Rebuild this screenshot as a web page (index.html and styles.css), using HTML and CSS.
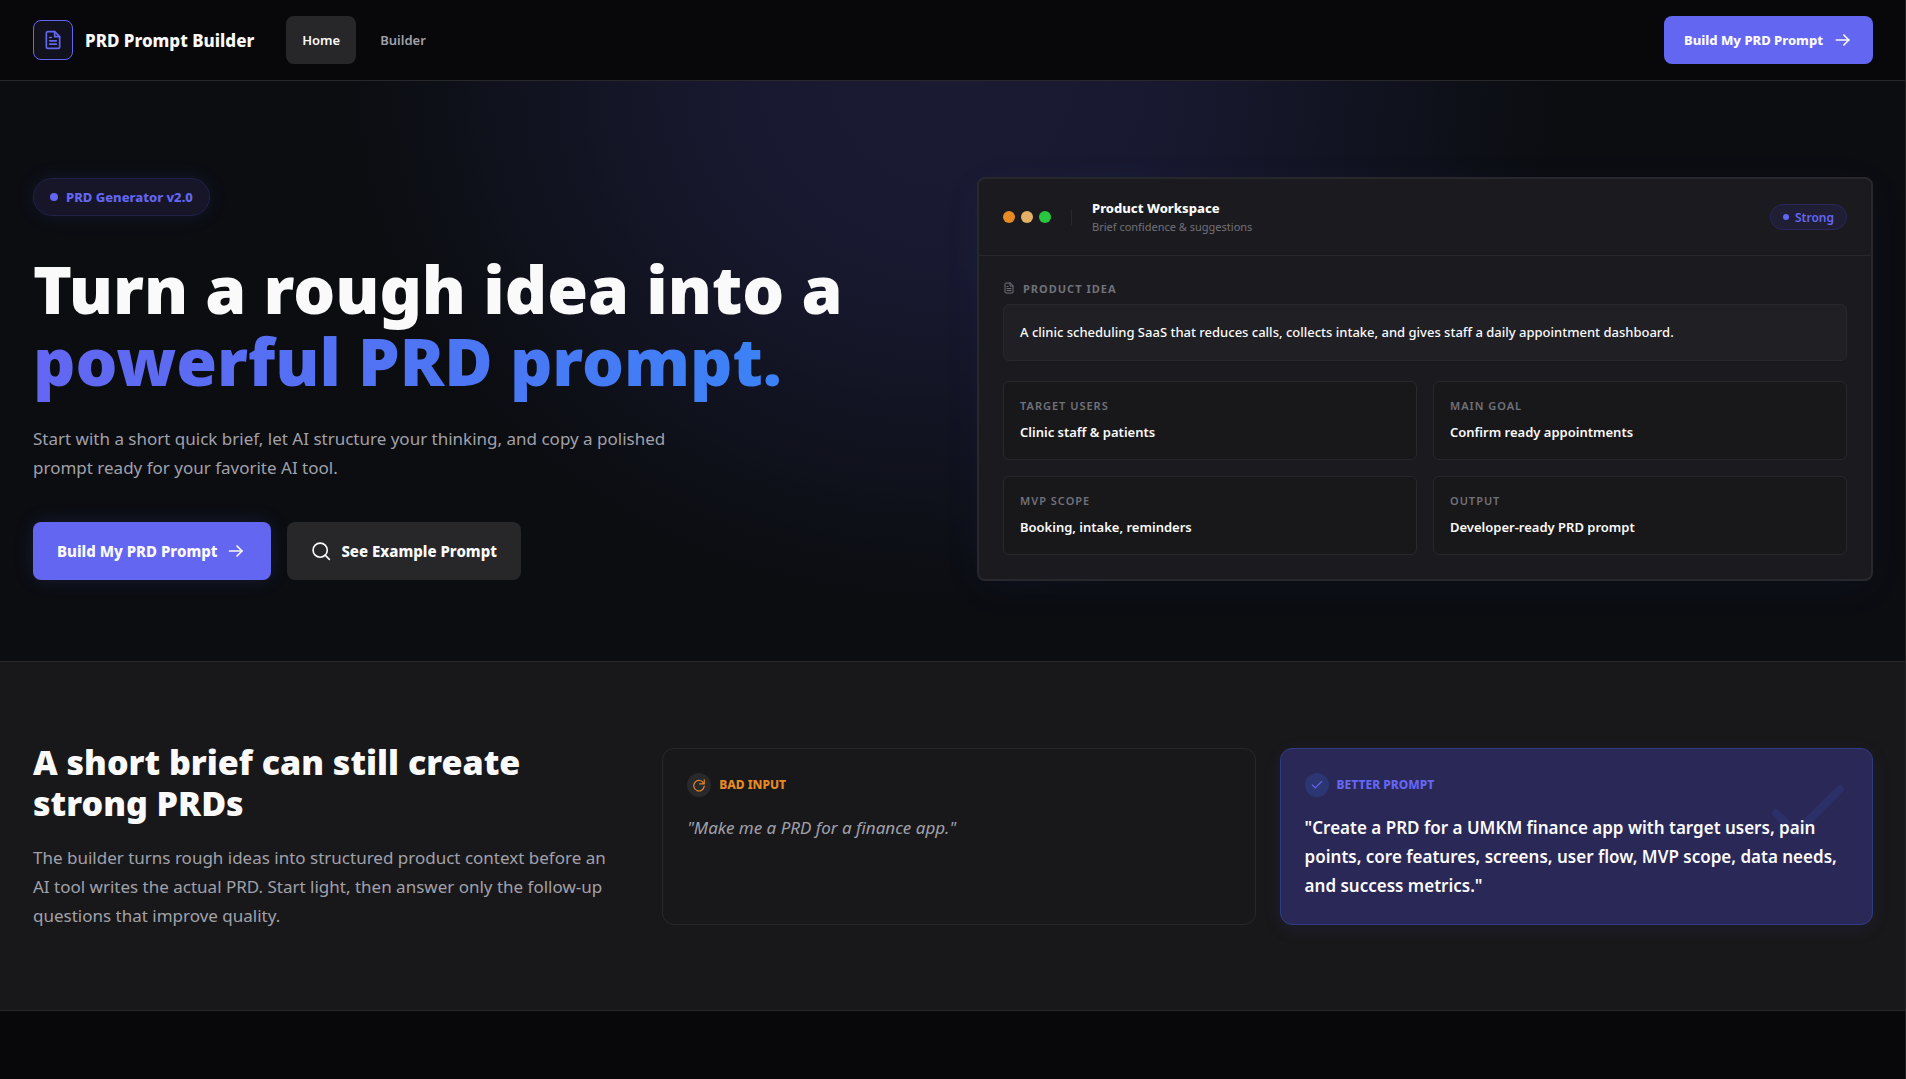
FILE: index.html
```
<!DOCTYPE html>
<html lang="en">
<head>
<meta charset="UTF-8">
<meta name="viewport" content="width=device-width, initial-scale=1.0">
<title>PRD Prompt Builder</title>
<link rel="stylesheet" href="styles.css">
</head>
<body>
    <header class="topbar">
        <div class="container topbar-inner">
            <a class="brand" href="#">
                <span class="brand-icon">
                    <svg class="icon" width="20" height="20" viewBox="0 0 24 24"><path d="M14 2H6a2 2 0 0 0-2 2v16a2 2 0 0 0 2 2h12a2 2 0 0 0 2-2V8z"/><path d="M14 2v6h6"/><path d="M16 13H8"/><path d="M16 17H8"/><path d="M10 9H8"/></svg>
                </span>
                <span class="brand-name">PRD Prompt Builder</span>
            </a>
            <nav class="nav">
                <a class="nav-link active" href="#">Home</a>
                <a class="nav-link" href="#builder">Builder</a>
            </nav>
            <button class="btn btn-primary btn-small" type="button">
                Build My PRD Prompt
                <svg class="icon" width="20" height="20" viewBox="0 0 24 24"><path d="M4 12h15"/><path d="M13 6l6 6-6 6"/></svg>
            </button>
        </div>
    </header>

    <main>
        <section class="hero">
            <div class="container hero-grid">
                <div class="hero-copy">
                    <span class="version"><span class="version-dot"></span>PRD Generator v2.0</span>
                    <h1>Turn a rough idea into a<br><span class="gradient-text">powerful PRD prompt.</span></h1>
                    <p class="lead hero-lead">Start with a short quick brief, let AI structure your thinking, and copy a polished prompt ready for your favorite AI tool.</p>
                    <div class="actions">
                        <button class="btn btn-primary btn-glow" type="button">
                            Build My PRD Prompt
                            <svg class="icon" width="20" height="20" viewBox="0 0 24 24"><path d="M3 12h15"/><path d="M12 6l6 6-6 6"/></svg>
                        </button>
                        <button class="btn btn-dark" type="button">
                            <svg class="icon" width="20" height="20" viewBox="0 0 24 24"><circle cx="11" cy="11" r="8.500"/><path d="M22 22l-5-5"/></svg>
                            See Example Prompt
                        </button>
                    </div>
                </div>

                <div class="workspace">
                    <div class="workspace-head">
                        <div class="lights">
                            <span class="light orange"></span>
                            <span class="light yellow"></span>
                            <span class="light green"></span>
                        </div>
                        <span class="divider"></span>
                        <div class="workspace-title">
                            <strong>Product Workspace</strong>
                            <span>Brief confidence &amp; suggestions</span>
                        </div>
                        <span class="status"><span class="status-dot"></span>Strong</span>
                    </div>
                    <div class="workspace-body">
                        <div class="idea-label">
                            <svg class="icon" width="12" height="12" viewBox="0 0 24 24"><path d="M14 2H6a2 2 0 0 0-2 2v16a2 2 0 0 0 2 2h12a2 2 0 0 0 2-2V8z"/><path d="M14 2v6h6"/><path d="M16 13H8"/><path d="M16 17H8"/><path d="M10 9H8"/></svg>
                            Product idea
                        </div>
                        <p class="idea">A clinic scheduling SaaS that reduces calls, collects intake, and gives staff a daily appointment dashboard.</p>
                        <dl class="facts">
                            <div class="fact"><dt>Target users</dt><dd>Clinic staff &amp; patients</dd></div>
                            <div class="fact"><dt>Main goal</dt><dd>Confirm ready appointments</dd></div>
                            <div class="fact"><dt>MVP scope</dt><dd>Booking, intake, reminders</dd></div>
                            <div class="fact"><dt>Output</dt><dd>Developer-ready PRD prompt</dd></div>
                        </dl>
                    </div>
                </div>
            </div>
        </section>

        <section class="compare">
            <div class="container compare-grid">
                <div class="compare-copy">
                    <h2>A short brief can still create strong PRDs</h2>
                    <p class="lead">The builder turns rough ideas into structured product context before an AI tool writes the actual PRD. Start light, then answer only the follow-up questions that improve quality.</p>
                </div>
                <div class="examples">
                    <article class="example">
                        <h3 class="example-title bad">
                            <span class="example-icon"><svg class="icon" width="14" height="14" viewBox="0 0 24 24"><path d="M20 9a9 9 0 1 0 1 5"/><path d="M21 3v7h-8"/></svg></span>
                            Bad input
                        </h3>
                        <p class="quote muted">"Make me a PRD for a finance app."</p>
                    </article>
                    <article class="example better">
                        <svg class="watermark" width="96" height="96" viewBox="0 0 24 24"><path d="M20 6L9 17l-5-5"/></svg>
                        <h3 class="example-title good">
                            <span class="example-icon"><svg class="icon" width="14" height="14" viewBox="0 0 24 24"><path d="M20 6L9 17l-5-5"/></svg></span>
                            Better prompt
                        </h3>
                        <p class="quote">"Create a PRD for a UMKM finance app with target users, pain points, core features, screens, user flow, MVP scope, data needs, and success metrics."</p>
                    </article>
                </div>
            </div>
        </section>
    </main>
</body>
</html>
```
FILE: styles.css
```
:root {
    --bg: #08080a;
    --panel: #18181a;
    --card: #1b1b1f;
    --line: #28282c;
    --accent: #6366f1;
    --text: #fafafa;
    --muted: #a1a1aa;
    --dim: #71717a;
}
* {
    box-sizing: border-box;
}
body {
    margin: 0;
    min-height: 100vh;
    border-right: 1px solid #232326;
    background: var(--bg);
    color: var(--text);
    font-family: "Noto Sans", "Open Sans", sans-serif;
    font-size: 14px;
}
h1, h2, h3, p, dl, dd {
    margin: 0;
}
a {
    color: inherit;
    text-decoration: none;
}
.container {
    padding: 0 32px 0 33px;
}
.icon {
    flex: none;
    fill: none;
    stroke: currentColor;
    stroke-width: 2;
    stroke-linecap: round;
    stroke-linejoin: round;
}

/* top bar */
.topbar {
    border-bottom: 1px solid var(--line);
}
.topbar-inner {
    display: flex;
    align-items: center;
    height: 80px;
}
.brand {
    display: flex;
    align-items: center;
    gap: 12px;
}
.brand-icon {
    display: flex;
    align-items: center;
    justify-content: center;
    width: 40px;
    height: 40px;
    border: 1px solid var(--accent);
    border-radius: 8px;
    background: #12121f;
    color: var(--accent);
}
.brand-name {
    font-size: 17px;
    font-weight: 800;
}
.nav {
    display: flex;
    gap: 8px;
    margin-left: 32px;
    margin-right: auto;
}
.nav-link {
    padding: 0 16px;
    border-radius: 8px;
    color: var(--muted);
    font-size: 13px;
    font-weight: 600;
    line-height: 48px;
}
.nav-link.active {
    background: #27272a;
    color: var(--text);
}

.btn {
    display: flex;
    align-items: center;
    justify-content: center;
    gap: 10px;
    height: 58px;
    padding: 0 24px;
    border: none;
    border-radius: 8px;
    color: var(--text);
    font-family: inherit;
    font-size: 15px;
    font-weight: 800;
    cursor: pointer;
}
.btn-small {
    height: 48px;
    padding: 0 20px;
    font-size: 13px;
}
.btn-primary {
    background: var(--accent);
}
.btn-glow {
    box-shadow: 0 0 20px rgba(99, 102, 241, 0.15);
}
.btn-dark {
    background: #27272a;
}

/* hero */
.hero {
    padding: 96px 0 80px;
    border-bottom: 1px solid var(--line);
    background: radial-gradient(ellipse 600px 520px at 50% 0, #1b1a33, #181930 35%, transparent), #0b0d11;
}
.hero-grid {
    display: grid;
    grid-template-columns: 1fr 1fr;
    gap: 48px;
    align-items: center;
}
.hero-copy {
    display: flex;
    flex-direction: column;
    align-items: flex-start;
}
.version {
    display: flex;
    align-items: center;
    gap: 8px;
    height: 38px;
    padding: 0 16px;
    border: 1px solid #20214a;
    border-radius: 19px;
    background: #161628;
    box-shadow: 0 0 20px rgba(99, 102, 241, 0.12);
    color: var(--accent);
    font-size: 13px;
    font-weight: 800;
}
.version-dot {
    width: 8px;
    height: 8px;
    border-radius: 50%;
    background: var(--accent);
}
h1 {
    margin-top: 36px;
    font-size: 66px;
    font-weight: 900;
    line-height: 72px;
}
.gradient-text {
    background: linear-gradient(90deg, #6366f1, #3b82f6);
    background-clip: text;
    -webkit-background-clip: text;
    color: transparent;
}
.lead {
    color: var(--muted);
    font-size: 17px;
    line-height: 29px;
}
.hero-lead {
    max-width: 672px;
    margin-top: 28px;
}
.actions {
    display: flex;
    gap: 16px;
    margin-top: 40px;
}

/* workspace preview */
.workspace {
    border: 2px solid var(--line);
    border-radius: 8px;
    background: var(--card);
    box-shadow: 0 8px 40px rgba(99, 102, 241, 0.05);
}
.workspace-head {
    display: flex;
    align-items: center;
    height: 77px;
    padding: 0 24px;
    border-bottom: 1px solid var(--line);
}
.lights {
    display: flex;
    gap: 6px;
}
.light {
    width: 12px;
    height: 12px;
    border-radius: 50%;
}
.orange {
    background: #e68a25;
}
.yellow {
    background: #e3b066;
}
.green {
    background: #27c840;
}
.divider {
    width: 1px;
    height: 16px;
    margin: 0 20px;
    background: var(--line);
}
.workspace-title {
    display: flex;
    flex-direction: column;
    margin-right: auto;
}
.workspace-title strong {
    font-size: 13px;
    font-weight: 800;
    line-height: 20px;
}
.workspace-title span {
    color: var(--dim);
    font-size: 11px;
    line-height: 18px;
}
.status {
    display: flex;
    align-items: center;
    gap: 6px;
    height: 26px;
    padding: 0 12px;
    border: 1px solid #29275c;
    border-radius: 13px;
    background: #1f1e35;
    color: var(--accent);
    font-size: 12px;
    font-weight: 600;
}
.status-dot {
    width: 6px;
    height: 6px;
    border-radius: 50%;
    background: var(--accent);
}
.workspace-body {
    padding: 24px;
}
.idea-label {
    display: flex;
    align-items: center;
    gap: 8px;
    height: 16px;
    margin-bottom: 8px;
    color: var(--dim);
    font-size: 11px;
    font-weight: 700;
    letter-spacing: 1px;
    text-transform: uppercase;
}
.idea {
    padding: 16px;
    border: 1px solid var(--line);
    border-radius: 6px;
    background: #202024;
    font-size: 13px;
    font-weight: 500;
    line-height: 23px;
}
.facts {
    display: grid;
    grid-template-columns: 1fr 1fr;
    gap: 16px;
    margin-top: 20px;
}
.fact {
    padding: 16px;
    border: 1px solid var(--line);
    border-radius: 6px;
    background: var(--panel);
}
.fact dt {
    color: var(--dim);
    font-size: 11px;
    font-weight: 600;
    letter-spacing: 1px;
    line-height: 16px;
    text-transform: uppercase;
}
.fact dd {
    margin-top: 8px;
    font-size: 13px;
    font-weight: 600;
    line-height: 21px;
}

/* comparison */
.compare {
    padding: 80px 0;
    border-bottom: 1px solid var(--line);
    background: var(--panel);
}
.compare-grid {
    display: grid;
    grid-template-columns: 12fr 25fr;
    gap: 48px;
    align-items: center;
}
h2 {
    margin-bottom: 19px;
    font-size: 34px;
    font-weight: 900;
    line-height: 41px;
}
.examples {
    display: grid;
    grid-template-columns: 1fr 1fr;
    gap: 24px;
}
.example {
    position: relative;
    padding: 24px;
    border: 1px solid var(--line);
    border-radius: 12px;
}
.example.better {
    border-color: #2f3c85;
    background: #2a2857;
    box-shadow: 0 4px 20px rgba(99, 102, 241, 0.08);
}
.example-title {
    display: flex;
    align-items: center;
    gap: 8px;
    margin-bottom: 16px;
    font-size: 12px;
    font-weight: 800;
    text-transform: uppercase;
}
.example-icon {
    display: flex;
    align-items: center;
    justify-content: center;
    width: 24px;
    height: 24px;
    border-radius: 50%;
    background: #29292c;
}
.bad {
    color: #e68a25;
}
.good {
    color: var(--accent);
}
.good .example-icon {
    background: #2c3673;
}
.quote {
    position: relative;
    font-size: 17px;
    font-weight: 600;
    line-height: 29px;
}
.quote.muted {
    color: var(--muted);
    font-style: italic;
    font-weight: 400;
}
.watermark {
    position: absolute;
    top: 16px;
    right: 16px;
    fill: none;
    stroke: #2b3069;
    stroke-width: 2;
    stroke-linecap: round;
    stroke-linejoin: round;
}
```
